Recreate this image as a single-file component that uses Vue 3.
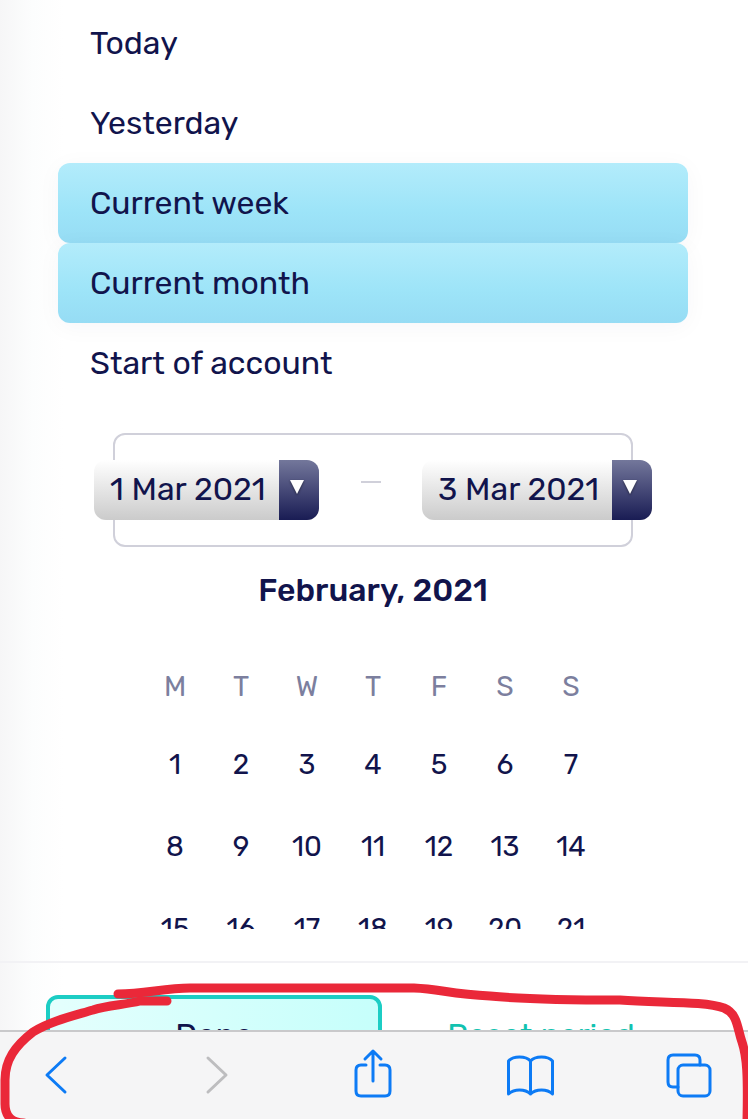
<template>
  <div class="screen">
    <div class="period-panel">
      <!-- quick periods and calendar -->
      <div class="panel-body">
        <ul class="period-list">
          <li v-for="period in periods" :key="period">
            <button
              class="period-item"
              :class="{ active: selected.includes(period) }"
              @click="selectPeriod(period)"
            >
              {{ period }}
            </button>
          </li>
        </ul>

        <div class="date-range">
          <label class="date-field">
            <select v-model="startDate" aria-label="Start date">
              <option>1 Mar 2021</option>
            </select>
            <span class="date-arrow">
              <svg width="16" height="16" viewBox="0 0 16 16"><path d="M1 1h14L8 15z" fill="#fff" /></svg>
            </span>
          </label>
          <span class="range-separator"></span>
          <label class="date-field">
            <select v-model="endDate" aria-label="End date">
              <option>3 Mar 2021</option>
            </select>
            <span class="date-arrow">
              <svg width="16" height="16" viewBox="0 0 16 16"><path d="M1 1h14L8 15z" fill="#fff" /></svg>
            </span>
          </label>
        </div>

        <h2 class="month-title">February, 2021</h2>
        <table class="calendar">
          <thead>
            <tr>
              <th v-for="(day, index) in weekdays" :key="index">{{ day }}</th>
            </tr>
          </thead>
          <tbody>
            <tr v-for="(week, index) in weeks" :key="index">
              <td v-for="day in week" :key="day">
                <button class="day-btn">{{ day }}</button>
              </td>
            </tr>
          </tbody>
        </table>
      </div>

      <div class="panel-footer">
        <button class="footer-btn done-btn">Done</button>
        <button class="footer-btn reset-btn" @click="resetPeriod">Reset period</button>
      </div>
    </div>

    <!-- browser toolbar -->
    <nav class="toolbar">
      <button aria-label="Back">
        <svg width="48" height="56" viewBox="0 0 48 56"><path d="M33 12L15 29l18 17" /></svg>
      </button>
      <button aria-label="Forward" class="disabled" disabled>
        <svg width="48" height="56" viewBox="0 0 48 56"><path d="M18 12l18 17-18 17" /></svg>
      </button>
      <button aria-label="Share">
        <svg width="48" height="56" viewBox="0 0 48 56">
          <path d="M17 19h-5q-5 0-5 5v21q0 5 5 5h24q5 0 5-5V24q0-5-5-5h-5M24 35V5M16 13l8-8 8 8" />
        </svg>
      </button>
      <button aria-label="Bookmarks">
        <svg width="48" height="56" viewBox="0 0 48 56">
          <path d="M23.500 15Q20 11 12.500 11T1.500 15v33q4-4 11-4t11 4q4-4 11-4t11 4V15q-3.500-4-11-4t-11 4zv33" />
        </svg>
      </button>
      <button aria-label="Tabs">
        <svg width="48" height="56" viewBox="0 0 48 56">
          <path d="M13 41H8q-5 0-5-5V14q0-5 5-5h22q5 0 5 5v5" />
          <rect x="13" y="19" width="32" height="31" rx="5" />
        </svg>
      </button>
    </nav>

    <!-- hand-drawn marker -->
    <svg class="marker" viewBox="0 0 748 139" preserveAspectRatio="none">
      <path d="M118 14C145 14 164 8 190 8H414C440 9 450 14 490 16C530 20 580 20 620 20C660 23 705 21 724 28C738 34 737 48 742 62C747 77 748 96 747 141" />
      <path d="M167 21H140C124 25 107 25 93 30C73 36 51 41 33 52C15 66 5 80 5 100V124C5 136 12 143 24 143" />
    </svg>
  </div>
</template>

<script setup>
import { ref } from 'vue'

const periods = ['Today', 'Yesterday', 'Current week', 'Current month', 'Start of account']
const selected = ref(['Current week', 'Current month'])

const startDate = ref('1 Mar 2021')
const endDate = ref('3 Mar 2021')

const weekdays = ['M', 'T', 'W', 'T', 'F', 'S', 'S']
// February 2021 starts on Monday and fills four whole weeks
const weeks = [0, 1, 2, 3].map((week) => weekdays.map((_, day) => week * 7 + day + 1))

function selectPeriod(period) {
  selected.value = [period]
}

function resetPeriod() {
  selected.value = []
}
</script>

<style>
body {
  margin: 0;
}
</style>

<style scoped>
.screen {
  position: relative;
  display: flex;
  flex-direction: column;
  height: 100vh;
  overflow: hidden;
  font-family: Rubik, Roboto, sans-serif;
  font-size: 32px;
  color: #11144c;
}

button,
select {
  font: inherit;
  color: inherit;
  border: none;
  background: none;
  padding: 0;
  margin: 0;
}

.period-panel {
  flex: 1;
  min-height: 0;
  display: flex;
  flex-direction: column;
  background: linear-gradient(to right, #f6f6f7, #fcfdfd 32px, #fff 64px);
}

.panel-body {
  flex: 1;
  min-height: 0;
  overflow: hidden;
  padding: 3px 60px 0 58px;
  margin-bottom: 32px;
}

.period-list {
  list-style: none;
  margin: 0;
  padding: 0;
}

.period-item {
  display: block;
  width: 100%;
  height: 80px;
  padding: 0 32px;
  text-align: left;
  border-radius: 12px;
}

.period-item.active {
  background: linear-gradient(#b3ecfb, #9de4f8 60%, #96dcf4);
  box-shadow: 0 4px 24px rgba(17, 20, 76, 0.04);
}

.date-range {
  display: flex;
  justify-content: space-between;
  align-items: center;
  height: 110px;
  margin: 30px 55px 0;
  border: 2px solid #d0d0da;
  border-radius: 12px;
}

.date-field {
  display: flex;
  height: 60px;
  border-radius: 12px;
  overflow: hidden;
  background: linear-gradient(#fff, #cbcbcb);
}

.date-field:first-child {
  margin-left: -21px;
}

.date-field:last-child {
  margin-right: -21px;
}

.date-field select {
  appearance: none;
  height: 60px;
  padding: 0 12px 2px 16px;
}

.date-arrow {
  display: flex;
  width: 40px;
  padding: 19px 0 0 10px;
  box-sizing: border-box;
  background: linear-gradient(#73779b, #191c54);
}

.date-arrow svg {
  filter: drop-shadow(0 1px 1px rgba(0, 0, 0, 0.5));
}

.range-separator {
  width: 20px;
  height: 2px;
  margin-bottom: 16px;
  background: #d0d0da;
}

.month-title {
  margin: 23px 0 39px;
  font-size: 32px;
  font-weight: 500;
  line-height: 40px;
  text-align: center;
}

.calendar {
  width: 462px;
  margin: 0 auto;
  table-layout: fixed;
  border-collapse: collapse;
  font-size: 28px;
  text-align: center;
}

.calendar th {
  height: 74px;
  padding: 0;
  font-weight: 400;
  color: #7c7f9e;
}

.calendar td {
  height: 82px;
  padding: 0;
}

.day-btn {
  width: 100%;
  height: 80px;
}

.panel-footer {
  display: flex;
  height: 69px;
  padding: 32px 48px 0 46px;
  box-sizing: border-box;
  border-top: 2px solid #f2f2f5;
  overflow: hidden;
}

.footer-btn {
  flex: 1;
  height: 80px;
  box-sizing: border-box;
  border-radius: 12px;
}

.done-btn {
  flex-basis: 18px;
  border: 4px solid #1ccdc4;
  background: linear-gradient(to right, #e4fffd, #c6fffb);
}

.reset-btn {
  color: #12c2b0;
}

.toolbar {
  display: flex;
  justify-content: space-between;
  height: 89px;
  padding: 14px 35px 0 32px;
  box-sizing: border-box;
  border-top: 2px solid #c9c9cb;
  background: #f5f5f6;
}

.toolbar button {
  height: 56px;
}

.toolbar svg {
  display: block;
  fill: none;
  stroke: #0d7bf5;
  stroke-width: 3;
  stroke-linecap: round;
  stroke-linejoin: round;
}

.toolbar .disabled svg {
  stroke: #bdbdbf;
}

.marker {
  position: absolute;
  left: 0;
  bottom: 0;
  width: 100%;
  height: 139px;
  fill: none;
  stroke: #ea2839;
  stroke-width: 9;
  stroke-linecap: round;
  stroke-linejoin: round;
  pointer-events: none;
}
</style>
